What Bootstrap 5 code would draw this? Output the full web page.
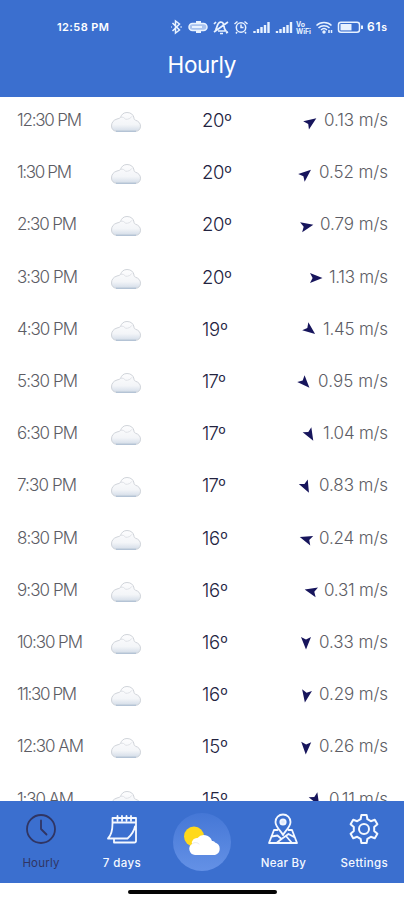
<!DOCTYPE html>
<html lang="en">
<head>
<meta charset="utf-8">
<meta name="viewport" content="width=device-width, initial-scale=1">
<title>Hourly</title>
<link href="https://cdn.jsdelivr.net/npm/bootstrap@5.3.0/dist/css/bootstrap.min.css" rel="stylesheet">
<style>
body{font-family:Inter,"Open Sans",sans-serif;height:900px;overflow:hidden;background:#fff}
.app-head{height:97px;background:#3b6fcf;padding-top:17px}
.status{height:20px;padding-left:57px;padding-right:17px}
.status-time,.status-pct{font-size:11px;font-weight:600;line-height:20px;white-space:nowrap}
.status-pct{font-size:12px}
.app-title{font-size:22.5px;font-weight:400;line-height:30px;margin-top:13px}
.hours{height:704px;overflow:hidden}
.hours-in{margin-top:-3px}
.hour{height:52.2px;padding-left:17px;padding-right:16px;font-size:17px;font-weight:300;color:#5c5c64;line-height:24px}
.c-time{width:93px}
.c-sky{width:92px}
.c-temp{width:60px;color:#23233f;font-weight:300;font-size:18.5px}
.fit{white-space:nowrap;display:inline-block}
.arrow{width:12px;height:12px;margin-top:3px;margin-right:7px;fill:#17155c;overflow:visible}
.app-nav{height:82px;background:#3b6fcf}
.tab{width:80.8px;padding-top:12px;padding-left:1px;font-size:11.5px;font-weight:500;color:#f4f8ff;line-height:16px}
.tab svg{width:32px;height:32px;fill:none;stroke:currentColor;stroke-width:1.8;stroke-linejoin:round;stroke-linecap:round}
.tab span{margin-top:10px}
.tab.now{color:#303563;font-weight:400}
.tab .hub{width:58px;height:58px;background:linear-gradient(#4577d6,#6491e6)}
.tab .hub svg{width:40px;height:34px;stroke:none}
.pill-bar{width:149px;height:4px;background:#050505;margin-top:7px}
</style>
</head>
<body>
<header class="app-head text-white">
  <div class="status d-flex align-items-center justify-content-between">
    <span class="status-time fit" data-w="52">12:58 PM</span>
    <div class="d-flex align-items-center">
      <svg width="196" height="20" viewBox="2 0 196 20" fill="none" stroke="#e8f2ff" stroke-width="1.5">
        <path d="M3.500 6l7 7-4 3V4l4 3-7 7M1.500 10h1.200M11.500 10h1.200" />
        <rect x="20" y="6.500" width="18" height="7" rx="3.500" fill="#a9c3ef"/><path d="M23 10h10M27 5h5M27 15h5" stroke-width="2"/>
        <path d="M46.500 13c2-2 1-7 5-8 2 0 3 1 3 3M49 14h8c-1-1-2-3-2-5M45 15L59 5M45 7l2-2M57 16l2-1M51 16.500h3" stroke-width="1.700"/>
        <circle cx="72" cy="10.500" r="4.700"/><path d="M72 7.500v3h2.500M65.500 7l3-2.500M78.500 7l-3-2.500M68 15l-1 1.500M76 15l1 1.500"/>
        <g stroke-width="2.400"><path d="M85.500 16v-2M89 16v-4M92.500 16v-6M96 16V8M99.500 16V5"/><path d="M108 16v-2M111.500 16v-4M115 16v-6M118.500 16V8M122 16V5"/></g>
        <g fill="#e8f2ff" stroke="none" font-size="7" font-weight="700"><text x="127" y="9.500" textLength="9" lengthAdjust="spacingAndGlyphs">Vo</text><text x="127" y="16.500" textLength="15" lengthAdjust="spacingAndGlyphs">WiFi</text></g>
        <path d="M147.500 8.500c4-4 11-4 15 0M149.500 11c3-3 8-3 11 0M152 13c2-2 4-2 6 0"/><circle cx="155" cy="15" r="1" fill="#e8f2ff"/><path d="M160 16v-3M162.500 16v-3" />
        <rect x="169.500" y="5.200" width="21" height="10" rx="2.500"/><rect x="171.500" y="7" width="11" height="6.400" fill="#e8f2ff" stroke="none"/><path d="M193 8.500v3.500" stroke-width="2"/>
      </svg>
      <span class="status-pct fit" data-w="20">61<small>s</small></span>
    </div>
  </div>
  <h1 class="app-title text-center mb-0"><span class="fit" data-w="69">Hourly</span></h1>
</header>

<main class="hours"><div class="hours-in" id="hours"></div></main>

<nav class="app-nav d-flex">
  <div class="tab now d-flex flex-column align-items-center">
    <svg viewBox="0 0 32 32"><circle cx="16" cy="16" r="14"/><path d="M16 7.500V16l5.500 5.500"/></svg>
    <span class="fit" data-w="37">Hourly</span>
  </div>
  <div class="tab d-flex flex-column align-items-center">
    <svg viewBox="0 0 32 32"><path d="M6.500 11V5h23.500V28a1.500 1.500 0 0 1-1.500 1.500H8V26M6.500 9.500H30M6.500 10.500C6.500 18 5.500 22 2 25.500h19.500c4-3.500 6.500-7 7.500-12M11.500 3v4.500M16 3v4.500M20.500 3v4.500M25 3v4.500"/></svg>
    <span class="fit" data-w="38">7 days</span>
  </div>
  <div class="tab d-flex flex-column align-items-center">
    <div class="hub rounded-circle d-flex align-items-center justify-content-center">
      <svg viewBox="0 0 40 34"><circle cx="12" cy="11.500" r="10" fill="#ffd91c"/><path d="M13 30a6 6 0 0 1-3-11 5 5 0 0 1 5.500-6A8.500 8.500 0 0 1 30 16c1.500 0 2.500.5 3 1.500A6.500 6.500 0 0 1 33 30z" fill="#fff"/><path d="M10 19c2-2 5-2 7 0" fill="none" stroke="#e4e7ed" stroke-width="1"/></svg>
    </div>
  </div>
  <div class="tab d-flex flex-column align-items-center">
    <svg viewBox="0 0 32 32"><path d="M16 22c-2-4-7.500-8-7.500-13a7.500 7.500 0 0 1 15 0c0 5-5.500 9-7.500 13z"/><circle cx="16" cy="9" r="2.700" fill="#dfe9fb"/><path d="M10.500 17H7L2 30h28l-5-13h-3.500M4.500 23.500l6-1 4 3.500-5 4M14.500 26l7-5 6.500 3.500M19 23l6 7"/></svg>
    <span class="fit" data-w="45">Near By</span>
  </div>
  <div class="tab d-flex flex-column align-items-center">
    <svg viewBox="0 0 32 32"><path d="M12.600 6.200L13.400 2h5.200l.8 4.200 3.400 2 4-1.450 2.600 4.500-3.200 2.800v3.900l3.200 2.800-2.600 4.500-4-1.450-3.400 2-.8 4.200h-5.200l-.8-4.200-3.400-2-4 1.450-2.600-4.500 3.200-2.800v-3.900l-3.200-2.800 2.600-4.500 4 1.450z" stroke-width="2"/><circle cx="16" cy="16" r="5" stroke-width="2"/></svg>
    <span class="fit" data-w="47">Settings</span>
  </div>
</nav>
<div class="pill-bar rounded-pill mx-auto"></div>

<svg width="0" height="0" class="d-block">
  <defs>
    <linearGradient id="cg" x1="0" y1="0" x2="0" y2="1"><stop offset="0" stop-color="#fdfdfe"/><stop offset=".65" stop-color="#f3f5f8"/><stop offset="1" stop-color="#d3dce8"/></linearGradient>
    <symbol id="sky" viewBox="0 0 32 22"><path d="M7 20.300C3.500 20.300 1.500 18 1.500 15c0-3.500 2-6 5.500-7 1.500-.5 2.500-.5 3.500-1.500C11.500 3.500 13.500 1.500 17 1.500c4 0 6.500 2.300 7 5.500 0 1.200.5 1.800 1.500 2.200 3 1 5 3 5 6 0 3-2 5.100-5 5.100z" fill="url(#cg)" stroke="#d0d4da" stroke-width="1"/><path d="M6 20.300h20" stroke="#b3c2d4" stroke-width="1.300"/><path d="M10.500 6.500c2-.8 4 0 5 1.800 3 .2 5-1 6.500-3" fill="none" stroke="#dcdfe4" stroke-width=".9"/></symbol>
    <symbol id="dart" viewBox="0 0 12 12" overflow="visible"><path d="M12.500 6L0 11l2.600-5L0 1z"/></symbol>
  </defs>
</svg>

<script src="https://cdn.jsdelivr.net/npm/bootstrap@5.3.0/dist/js/bootstrap.bundle.min.js"></script>
<script>
// time, label width, temperature, wind speed, label width, wind angle
const rows = [
  ['12:30 PM',65,20,'0.13',64,-35],
  ['1:30 PM',55,20,'0.52',69,-40],
  ['2:30 PM',60,20,'0.79',68,-12],
  ['3:30 PM',61,20,'1.13',59,0],
  ['4:30 PM',61,19,'1.45',65,38],
  ['5:30 PM',61,17,'0.95',70,47],
  ['6:30 PM',61,17,'1.04',65,60],
  ['7:30 PM',60,17,'0.83',69,63],
  ['8:30 PM',61,16,'0.24',69,197],
  ['9:30 PM',61,16,'0.31',64,194],
  ['10:30 PM',66,16,'0.33',69,90],
  ['11:30 PM',60,16,'0.29',69,100],
  ['12:30 AM',67,15,'0.26',69,92],
  ['1:30 AM',57,15,'0.11',59,60]
];
const tempWidth = {20:30, 19:26, 17:24, 16:26, 15:26};
document.getElementById('hours').innerHTML = rows.map(([t,tw,d,w,ww,a]) => `
  <div class="hour d-flex align-items-center">
    <div class="c-time"><span class="fit" data-w="${tw}">${t}</span></div>
    <div class="c-sky d-flex"><svg width="32" height="22" class="mt-1"><use href="#sky"/></svg></div>
    <div class="c-temp"><span class="fit" data-w="${tempWidth[d]}">${d}º</span></div>
    <div class="ms-auto d-flex align-items-center">
      <svg class="arrow"><g transform="rotate(${a} 6 6)"><use href="#dart" width="12" height="12"/></g></svg>
      <span class="fit" data-w="${ww}">${w} m/s</span>
    </div>
  </div>`).join('');
document.querySelectorAll('.fit').forEach(e => {
  const n = e.textContent.length;
  const s = (e.dataset.w - e.getBoundingClientRect().width) / (n - 1);
  e.style.letterSpacing = s + 'px';
  e.style.marginRight = -s + 'px';
});
</script>
</body>
</html>
